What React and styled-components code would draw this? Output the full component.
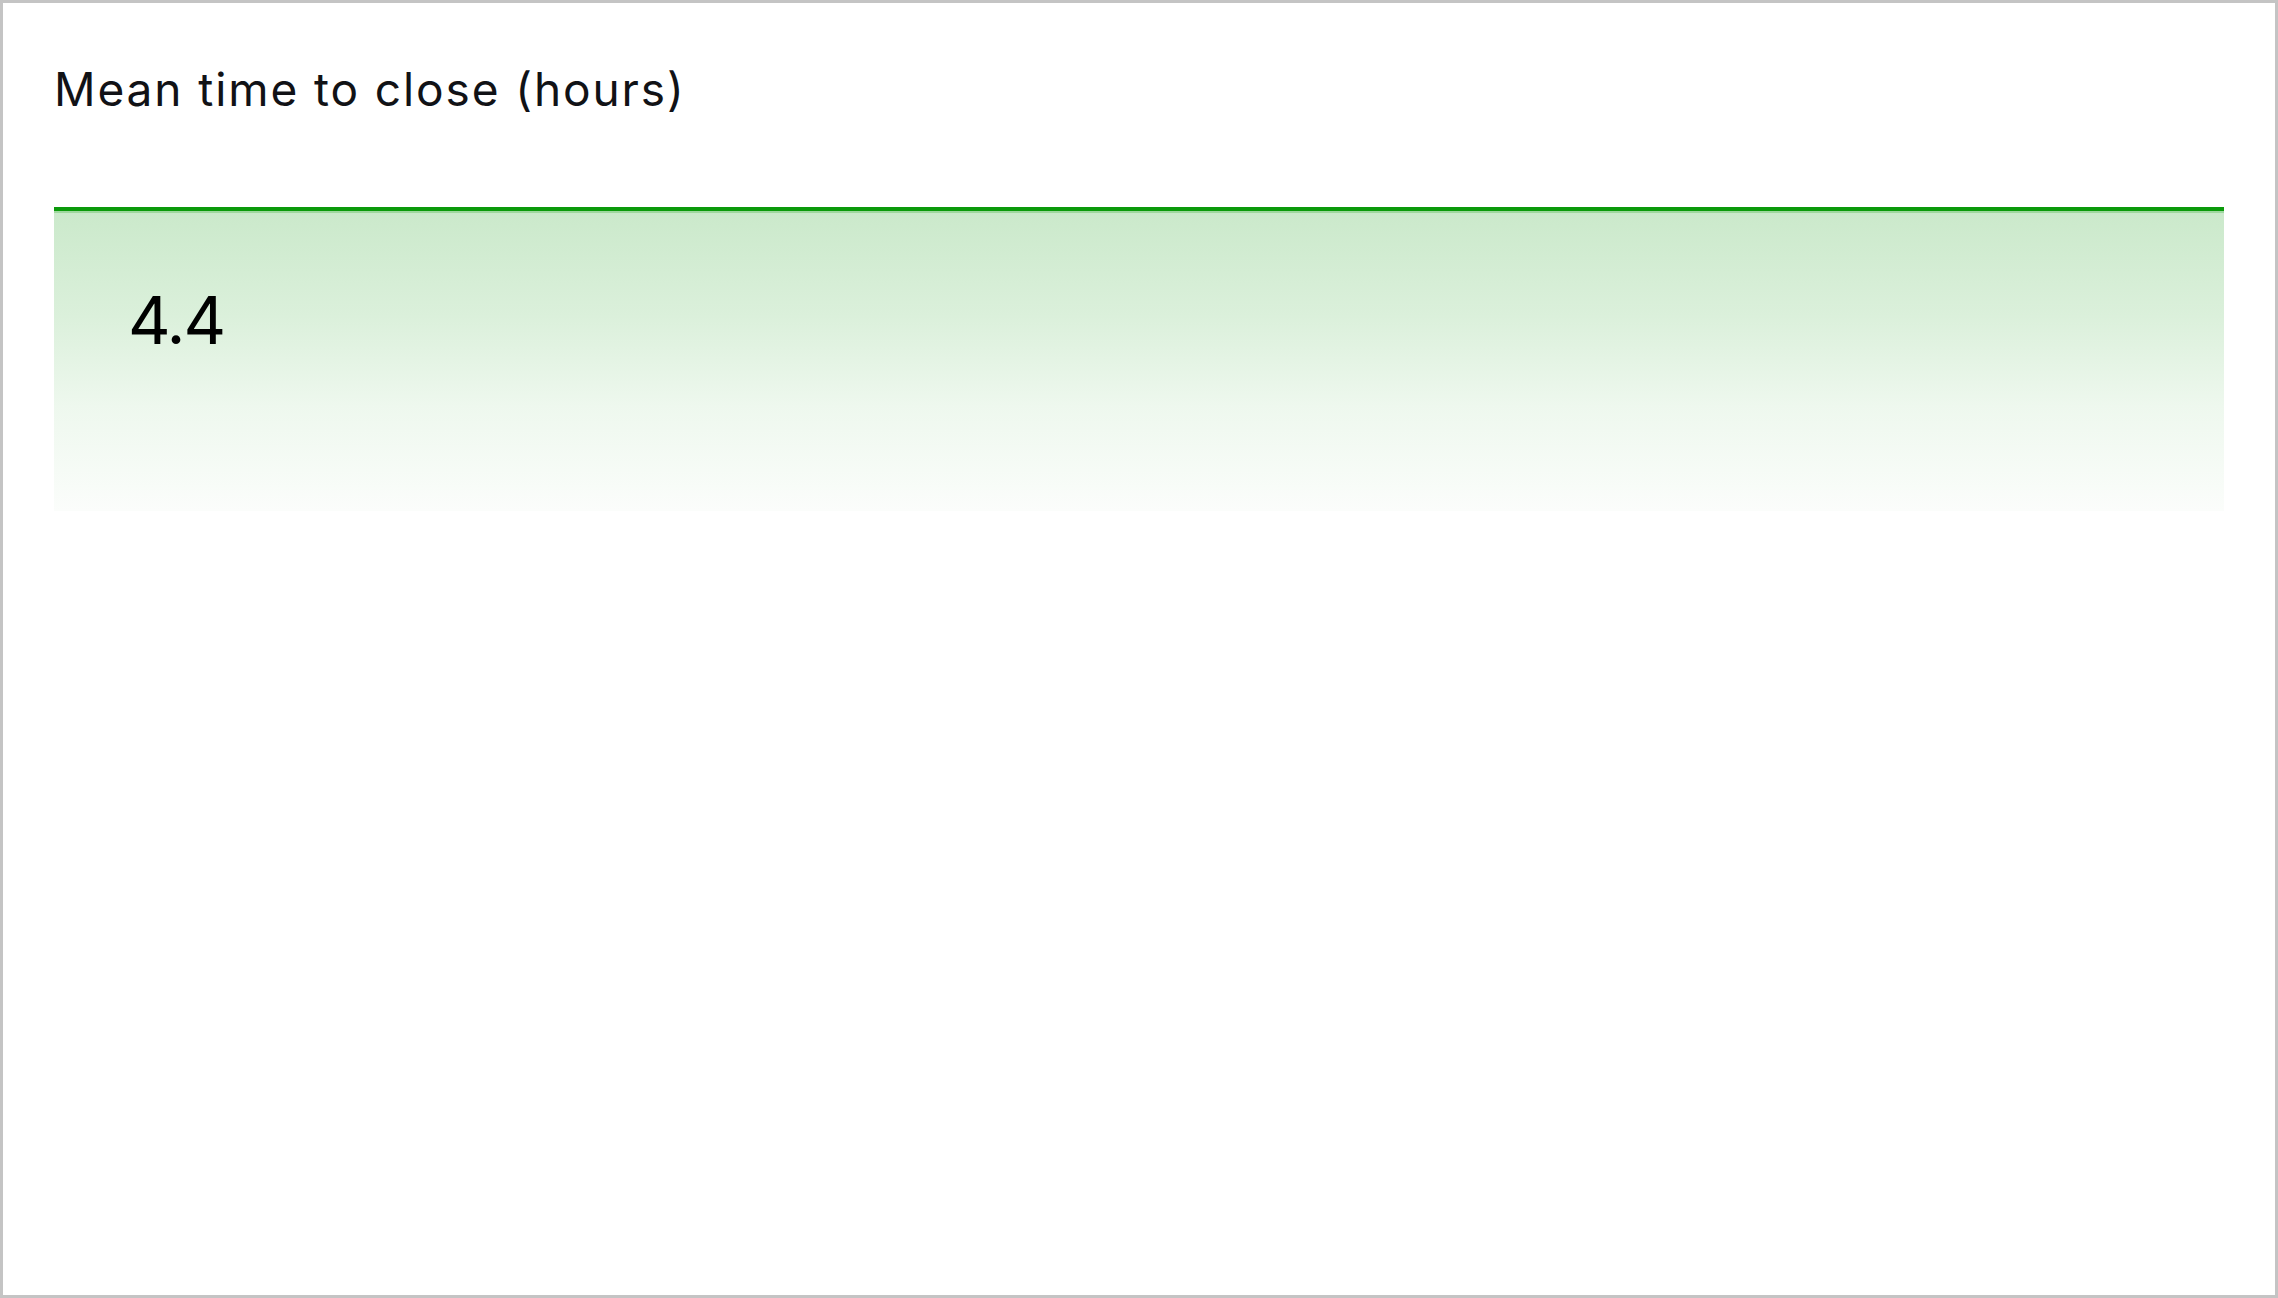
import styled, { createGlobalStyle } from "styled-components";

const GlobalStyle = createGlobalStyle`
  html, body {
    margin: 0;
    padding: 0;
    background: #fff;
  }
  * {
    box-sizing: border-box;
  }
`;

const Card = styled.div`
  width: 2278px;
  height: 1298px;
  border: 3px solid #c4c4c4;
  background: #fff;
  padding: 59px 51px 51px;
  font-family: Inter, "Noto Sans", sans-serif;
  display: flex;
  flex-direction: column;
`;

const Title = styled.h2`
  margin: 0;
  font-size: 46px;
  line-height: 55px;
  font-weight: 400;
  letter-spacing: 1.9px;
  color: #111216;
`;

const Area = styled.div`
  margin-top: 90px;
  height: 304px;
  border-top: 4px solid #0b9a0b;
  background: linear-gradient(
    to bottom,
    #9fd89f 0,
    #9fd89f 2px,
    #cbe9cb 2px,
    #dbf0db 35%,
    #eef8ee 65%,
    #fbfdfb 100%
  );
  padding: 69px 0 0 74px;
`;

const Value = styled.div`
  font-size: 66px;
  line-height: 80px;
  font-weight: 400;
  letter-spacing: -2px;
  color: #000;
`;

export default function App() {
  return (
    <>
      <GlobalStyle />
      <Card>
        <Title>Mean time to close (hours)</Title>
        <Area>
          <Value>4.4</Value>
        </Area>
      </Card>
    </>
  );
}
